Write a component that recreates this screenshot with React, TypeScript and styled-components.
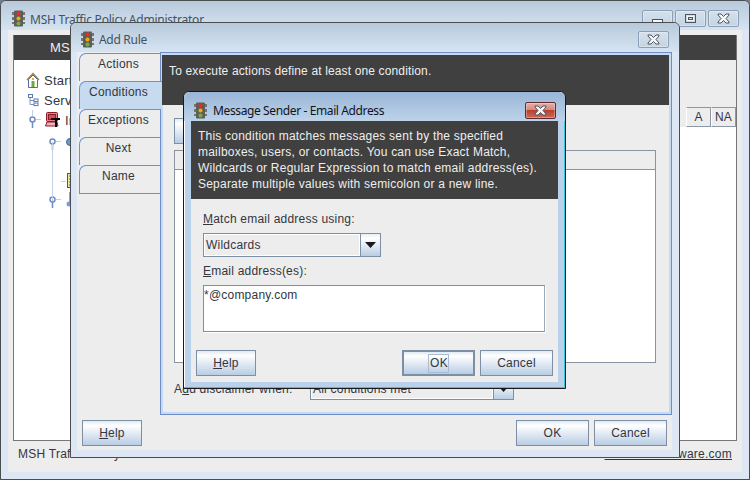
import React from "react";
import styled, { createGlobalStyle } from "styled-components";

const Global = createGlobalStyle`
  html, body { margin: 0; padding: 0; background: #6f7f8f; }
  #root { width: 750px; height: 480px; overflow: hidden; }
  * { box-sizing: border-box; }
`;

const Desktop = styled.div`
  position: relative;
  width: 750px;
  height: 480px;
  overflow: hidden;
  font-family: "Liberation Sans", Arial, sans-serif;
  font-size: 12px;
  letter-spacing: 0.22px;
  color: #33363f;
`;

const WindowShell = styled.div`
  display: flex;
  flex-direction: column;
  border: 1px solid #4a4d50;
  border-radius: 6px 6px 0 0;
  background: #dce7f3;
`;

const MainWindow = styled(WindowShell)`
  width: 750px;
  height: 480px;
`;

const RuleWindow = styled(WindowShell)`
  position: absolute;
  left: 70px;
  top: 22px;
  width: 610px;
  height: 436px;
`;

const SenderDialog = styled(WindowShell)`
  position: absolute;
  left: 183px;
  top: 91px;
  width: 383px;
  height: 298px;
  border-color: #1a1a1a;
  border-radius: 6px 6px 0 0;
  background: #b9d1ea;
  box-shadow: inset -1px -1px 0 #3ec6d8, inset 1px 1px 0 #fff;
`;

const TitleBar = styled.div<{ $h: number; $pad: number; $active?: boolean }>`
  flex: none;
  display: flex;
  align-items: center;
  height: ${(p) => p.$h}px;
  padding-top: ${(p) => p.$pad}px;
  background: ${(p) =>
    p.$active
      ? "linear-gradient(#99b5d6, #bdd3ea)"
      : "linear-gradient(#b8c9da, #d6e4f2)"};
  border-radius: 6px 6px 0 0;
`;

const TitleIcon = styled.svg<{ $left: number }>`
  flex: none;
  margin-left: ${(p) => p.$left}px;
  width: 13px;
  height: 17px;
`;

const TitleText = styled.div<{ $active?: boolean; $spacing: number }>`
  flex: 1;
  margin-left: ${(p) => (p.$active ? 6 : 5)}px;
  padding-top: 1px;
  font-family: "Noto Sans", "Liberation Sans", sans-serif;
  font-size: 12px;
  letter-spacing: ${(p) => p.$spacing}px;
  color: ${(p) => (p.$active ? "#10141c" : "#44525f")};
`;

const CaptionButtons = styled.div<{ $right: number }>`
  display: flex;
  gap: 2px;
  margin-right: ${(p) => p.$right}px;
`;

const CaptionButton = styled.div<{ $danger?: boolean }>`
  width: 31px;
  height: 17px;
  display: flex;
  align-items: center;
  justify-content: center;
  border: 1px solid ${(p) => (p.$danger ? "#5e2b33" : "#8ba0b6")};
  border-radius: 2px;
  background: ${(p) =>
    p.$danger
      ? "linear-gradient(#e5b0a6 0%, #d68a7c 45%, #b9402e 50%, #cf6a58 100%)"
      : "linear-gradient(#d5e0ec, #c4d4e4)"};
  box-shadow: inset 0 0 0 1px rgba(255, 255, 255, 0.3);
`;

const GlyphSvg = styled.svg`
  display: block;
`;

const Frame = styled.div<{ $left: number; $side: number }>`
  flex: 1;
  min-height: 0;
  display: flex;
  flex-direction: column;
  padding: 0 ${(p) => p.$side}px ${(p) => p.$side}px ${(p) => p.$left}px;
`;

const Surface = styled.div`
  flex: 1;
  min-height: 0;
  display: flex;
  flex-direction: column;
  background: #ededed;
`;

const MainSurface = styled(Surface)`
  padding: 5px 5px 0;
`;

const MainPanel = styled.div`
  flex: none;
  height: 406px;
  display: flex;
  flex-direction: column;
  border: 1px solid #777;
  border-top: 0;
`;

const Banner = styled.div`
  flex: none;
  background: #404040;
  color: #eee;
`;

const MainBanner = styled(Banner)`
  height: 25px;
  line-height: 25px;
  padding-left: 36px;
  font-size: 13px;
`;

const MainSplit = styled.div`
  flex: 1;
  min-height: 0;
  display: grid;
  grid-template-columns: 300px 1fr;
`;

const Tree = styled.div`
  background: #fff;
  padding-top: 10px;
  display: flex;
  flex-direction: column;
`;

const TreeRow = styled.div<{ $indent: number; $h?: number; $gap?: number; $end?: boolean }>`
  display: flex;
  align-items: ${(p) => (p.$end ? "flex-end" : "center")};
  gap: ${(p) => p.$gap ?? 4}px;
  height: ${(p) => p.$h ?? 20}px;
  padding-left: ${(p) => p.$indent}px;
  white-space: nowrap;
  font-size: 13px;
`;

const TreeBranch = styled.div`
  position: relative;
  margin-top: 2px;
  &::before {
    content: "";
    position: absolute;
    left: 38px;
    top: 10px;
    height: 59px;
    width: 1px;
    background: #c3d1e4;
  }
`;

const MainRight = styled.div`
  display: flex;
  flex-direction: column;
`;

const MainSpacer = styled.div`
  height: 47px;
  background: #ededed;
`;

const ColumnHead = styled.div`
  height: 20px;
  display: flex;
  justify-content: flex-end;
  background: #ededed;
`;

const HeadCell = styled.div<{ $w: number }>`
  width: ${(p) => p.$w}px;
  display: flex;
  align-items: center;
  justify-content: center;
  border-right: 1px solid #8a98a8;
  border-bottom: 1px solid #8a98a8;
  border-top: 1px solid #8a98a8;
  border-left: 1px solid #fff;
`;

const WhiteFill = styled.div`
  flex: 1;
  background: #fff;
`;

const StatusBar = styled.div`
  flex: 1;
  display: flex;
  justify-content: space-between;
  align-items: center;
  padding: 0 5px 5px;
  letter-spacing: 0.25px;
`;

const StatusLink = styled.span`
  text-decoration: underline;
`;

const RuleBody = styled(Surface)`
  display: grid;
  grid-template-columns: minmax(0, 1fr);
  grid-template-rows: 363px 1fr;
`;

const RuleTop = styled.div`
  display: flex;
  padding-left: 2px;
  min-height: 0;
  min-width: 0;
`;

const TabColumn = styled.div`
  flex: none;
  width: 81px;
  padding-top: 1px;
  display: flex;
  flex-direction: column;
`;

const Tab = styled.div<{ $selected?: boolean }>`
  position: relative;
  z-index: ${(p) => (p.$selected ? 2 : 0)};
  height: 28px;
  margin-right: ${(p) => (p.$selected ? "-2px" : "0")};
  padding-top: 3px;
  padding-right: ${(p) => (p.$selected ? "5px" : "3px")};
  line-height: 15px;
  text-align: center;
  border-top: 1px solid #7190c8;
  border-left: 1px solid #7190c8;
  border-top-left-radius: 7px;
  background: ${(p) => (p.$selected ? "#c6daf0" : "#ededed")};
`;

const TabEnd = styled.div`
  height: 1px;
  background: #7190c8;
`;

const TabPanel = styled.div`
  flex: 1;
  min-width: 0;
  display: flex;
  flex-direction: column;
  border: 1px solid #6d8cc8;
  background: #ededed;
  box-shadow: inset 0 0 0 2px #c6daf0;
  padding: 2px 2px 3px 1px;
`;

const RuleBanner = styled(Banner)`
  height: 50px;
  padding: 9px 7px;
  line-height: 15px;
  letter-spacing: 0.14px;
`;

const PanelContent = styled.div`
  flex: 1;
  padding: 13px 13px 0 12px;
  display: flex;
  flex-direction: column;
`;

const Table = styled.div`
  height: 213px;
  margin-top: 6px;
  width: 482px;
  border: 1px solid #8a94a0;
  display: flex;
  flex-direction: column;
`;

const TableHead = styled.div`
  height: 19px;
  border-bottom: 1px solid #8a94a0;
  background: #ededed;
`;

const TableFill = styled.div`
  flex: 1;
  background: #fff;
`;

const ConditionRow = styled.div`
  display: flex;
  align-items: center;
  margin-top: 15px;
  white-space: nowrap;
`;

const ConditionLabel = styled.div`
  width: 136px;
`;

const Combo = styled.div<{ $w: number; $h: number }>`
  flex: none;
  display: flex;
  width: ${(p) => p.$w}px;
  height: ${(p) => p.$h}px;
  border: 1px solid #7d8fa3;
  background: #ededed;
`;

const ComboValue = styled.div`
  flex: 1;
  display: flex;
  align-items: center;
  padding-left: 2px;
  box-shadow: inset 0 0 0 1px #fff;
`;

const ComboArrow = styled.div`
  flex: none;
  width: 20px;
  display: flex;
  align-items: center;
  justify-content: center;
  border-left: 1px solid #7d8fa3;
  background: linear-gradient(#e9eff6, #fff 20%, #b9cde3);
`;

const Button = styled.div<{ $w: number; $default?: boolean }>`
  flex: none;
  width: ${(p) => p.$w}px;
  height: 26px;
  display: flex;
  align-items: center;
  justify-content: center;
  border: ${(p) => (p.$default ? 2 : 1)}px solid #7d8fa3;
  background: linear-gradient(#dfe8f2 0%, #fff 18%, #b8cde3 100%);
`;

const FocusLabel = styled.span`
  padding: 1px 0 1px 1px;
  outline: 1px solid #a9bcd6;
  line-height: 15px;
`;

const ButtonBar = styled.div<{ $pad: string }>`
  display: flex;
  justify-content: space-between;
  padding: ${(p) => p.$pad};
`;

const ButtonGroup = styled.div`
  display: flex;
  gap: 5px;
`;

const Mnemonic = styled.span`
  text-decoration: underline;
`;

const DialogBanner = styled(Banner)`
  height: 78px;
  padding: 7px 7px;
  line-height: 16px;
`;

const DialogBody = styled(Surface)`
  flex: none;
  height: 183px;
`;

const DialogForm = styled.div`
  flex: 1;
  padding: 12px 12px 0;
  display: flex;
  flex-direction: column;
`;

const FieldLabel = styled.div<{ $top?: number }>`
  line-height: 16px;
  height: 16px;
  margin-top: ${(p) => p.$top ?? 0}px;
  margin-bottom: 6px;
`;

const AddressBox = styled.div`
  width: 342px;
  height: 47px;
  background: #fff;
  border: 1px solid #7d8fa3;
  border-right-color: #9aa8b8;
  box-shadow: 1px 1px 0 #fff;
  padding: 2px 0 0 0;
  line-height: 15px;
`;

const Traffic = ({ left }: { left: number }) => (
  <TitleIcon $left={left} viewBox="0 0 13 17">
    <path d="M0 2h2v3H0zM11 2h2v3h-2zM0 7h2v3H0zM11 7h2v3h-2zM0 12h2v2H0zM11 12h2v2h-2z" fill="#77756f" />
    <rect x="2" y="0.5" width="9" height="16" rx="1" fill="#5e5e58" />
    <circle cx="6.5" cy="3.5" r="2" fill="#ee2a22" />
    <circle cx="6.5" cy="8.5" r="2" fill="#f2a81e" />
    <circle cx="6.5" cy="13.5" r="2" fill="#6fb13a" />
  </TitleIcon>
);

const CloseGlyph = () => (
  <GlyphSvg width="13" height="11" viewBox="0 0 13 11">
    <path
      d="M1 1h3l2.5 2.5L9 1h3v1L9 5.5 12 9v1H9L6.5 7.5 4 10H1V9l3-3.5L1 2z"
      fill="#f4f6f8"
      stroke="#4e5560"
      strokeWidth="1"
    />
  </GlyphSvg>
);

const MinGlyph = () => (
  <GlyphSvg width="11" height="9" viewBox="0 0 11 9">
    <rect x="0.5" y="5.5" width="10" height="3" fill="#f4f6f8" stroke="#4e5560" />
  </GlyphSvg>
);

const MaxGlyph = () => (
  <GlyphSvg width="11" height="9" viewBox="0 0 11 9">
    <rect x="0.5" y="0.5" width="10" height="8" fill="none" stroke="#4e5560" />
    <rect x="2.5" y="2.5" width="6" height="4" fill="none" stroke="#f4f6f8" />
    <rect x="3.5" y="3.5" width="4" height="2" fill="none" stroke="#4e5560" />
  </GlyphSvg>
);

const ArrowGlyph = () => (
  <GlyphSvg width="11" height="6" viewBox="0 0 11 6">
    <path d="M0 0h11L5.5 6z" fill="#1a1a1a" />
  </GlyphSvg>
);

const Handle = ({ up }: { up?: boolean }) => (
  <GlyphSvg width="14" height="20" viewBox="0 0 14 20">
    {up && <path d="M5.5 0v6" stroke="#c3d1e4" />}
    <path d="M9 9.5h5" stroke="#c3d1e4" />
    <circle cx="5.5" cy="9.5" r="2.5" fill="#fff" stroke="#6e8cc4" strokeWidth="1.5" />
    <path d="M5.5 12v6" stroke="#6e8cc4" strokeWidth="1.5" />
  </GlyphSvg>
);

const HouseIcon = () => (
  <GlyphSvg width="14" height="16" viewBox="0 0 14 16">
    <path d="M1 8l6-6.5L13 8" fill="none" stroke="#a07c4a" strokeWidth="1.3" />
    <path d="M2.5 7.5L7 3l4.5 4.5v8h-9z" fill="#fff" stroke="#4a6fa0" />
    <rect x="5.5" y="9" width="3" height="6" fill="#6fa83e" />
    <rect x="6" y="6" width="2" height="2" fill="#e0b040" />
  </GlyphSvg>
);

const ServicesIcon = () => (
  <GlyphSvg width="14" height="14" viewBox="0 0 14 14">
    <path d="M4 4v7.5h4M4 7.5h4" fill="none" stroke="#7f97c0" />
    <rect x="2.5" y="1.5" width="4" height="3" fill="#fff" stroke="#5a7ab0" />
    <rect x="8" y="6" width="4" height="2.6" fill="#fff" stroke="#5a7ab0" />
    <rect x="8" y="10" width="4" height="2.6" fill="#fff" stroke="#5a7ab0" />
  </GlyphSvg>
);

const ServerIcon = () => (
  <GlyphSvg width="16" height="16" viewBox="0 0 16 16">
    <rect x="1.5" y="0.5" width="11" height="9" rx="1" fill="#e8808a" stroke="#8a1a28" />
    <rect x="3.5" y="2.5" width="7" height="5" fill="#d0505c" stroke="#8a1a28" />
    <path d="M0.5 14l1.5-4h10l1 4z" fill="#f0b0b8" stroke="#8a1a28" />
    <path d="M6 6h9v2h-3v7h-2V8H6z" fill="#000" />
  </GlyphSvg>
);

const BallIcon = () => (
  <GlyphSvg width="8" height="8" viewBox="0 0 8 8">
    <circle cx="4" cy="4" r="3.5" fill="#6a9ac8" stroke="#3d6a98" />
  </GlyphSvg>
);

const DocIcon = () => (
  <GlyphSvg width="20" height="16" viewBox="0 0 20 16">
    <path d="M0 8.5h5" stroke="#c3d1e4" />
    <rect x="6.5" y="0.5" width="6" height="14" fill="#f4e8a0" stroke="#555" />
    <path d="M8 3h4M8 6h4M8 9h4M8 12h4" stroke="#2a8a70" />
  </GlyphSvg>
);

const PenIcon = () => (
  <GlyphSvg width="10" height="16" viewBox="0 0 10 16">
    <rect x="3.5" y="0.5" width="4" height="9" fill="#dfe3e8" stroke="#9aa4ae" />
    <circle cx="3" cy="12" r="2.5" fill="#7a9ad8" />
  </GlyphSvg>
);

export default function App() {
  return (
    <Desktop>
      <Global />
      <MainWindow>
        <TitleBar $h={29} $pad={6}>
          <Traffic left={11} />
          <TitleText $spacing={-0.22}>MSH Traffic Policy Administrator</TitleText>
          <CaptionButtons $right={10}>
            <CaptionButton><MinGlyph /></CaptionButton>
            <CaptionButton><MaxGlyph /></CaptionButton>
            <CaptionButton><CloseGlyph /></CaptionButton>
          </CaptionButtons>
        </TitleBar>
        <Frame $left={7} $side={7}>
          <MainSurface>
            <MainPanel>
              <MainBanner>MSH Traffic Policy Administrator</MainBanner>
              <MainSplit>
                <Tree>
                  <TreeRow $indent={12}><HouseIcon />Start Page</TreeRow>
                  <TreeRow $indent={12}><ServicesIcon />Services</TreeRow>
                  <TreeRow $indent={13}><Handle up /><ServerIcon />Incoming</TreeRow>
                  <TreeBranch>
                    <TreeRow $indent={33} $gap={5}><Handle /><BallIcon />Rules</TreeRow>
                    <TreeRow $indent={47} $h={37} $gap={0} $end><DocIcon /></TreeRow>
                    <TreeRow $indent={33} $gap={5} $h={22}><Handle /><PenIcon /></TreeRow>
                  </TreeBranch>
                </Tree>
                <MainRight>
                  <MainSpacer />
                  <ColumnHead>
                    <HeadCell $w={25}>A</HeadCell>
                    <HeadCell $w={25}>NA</HeadCell>
                  </ColumnHead>
                  <WhiteFill />
                </MainRight>
              </MainSplit>
            </MainPanel>
            <StatusBar>
              <span>MSH Traffic Policy Administrator</span>
              <StatusLink>www.mshsoftware.com</StatusLink>
            </StatusBar>
          </MainSurface>
        </Frame>
      </MainWindow>

      <RuleWindow>
        <TitleBar $h={29} $pad={3}>
          <Traffic left={10} />
          <TitleText $spacing={-0.3}>Add Rule</TitleText>
          <CaptionButtons $right={10}>
            <CaptionButton><CloseGlyph /></CaptionButton>
          </CaptionButtons>
        </TitleBar>
        <Frame $left={6} $side={7}>
          <RuleBody>
            <RuleTop>
              <TabColumn>
                <Tab>Actions</Tab>
                <Tab $selected>Conditions</Tab>
                <Tab>Exceptions</Tab>
                <Tab>Next</Tab>
                <Tab>Name</Tab>
                <TabEnd />
              </TabColumn>
              <TabPanel>
                <RuleBanner>To execute actions define at least one condition.</RuleBanner>
                <PanelContent>
                  <Button $w={70}>Add</Button>
                  <Table>
                    <TableHead />
                    <TableFill />
                  </Table>
                  <ConditionRow>
                    <ConditionLabel>A<Mnemonic>d</Mnemonic>d disclaimer when:</ConditionLabel>
                    <Combo $w={204} $h={22}>
                      <ComboValue>All conditions met</ComboValue>
                      <ComboArrow><ArrowGlyph /></ComboArrow>
                    </Combo>
                  </ConditionRow>
                </PanelContent>
              </TabPanel>
            </RuleTop>
            <ButtonBar $pad="5px 5px 0">
              <Button $w={60}><span><Mnemonic>H</Mnemonic>elp</span></Button>
              <ButtonGroup>
                <Button $w={73}>OK</Button>
                <Button $w={73}>Cancel</Button>
              </ButtonGroup>
            </ButtonBar>
          </RuleBody>
        </Frame>
      </RuleWindow>

      <SenderDialog>
        <TitleBar $h={29} $pad={7} $active>
          <Traffic left={10} />
          <TitleText $active $spacing={-0.38}>Message Sender - Email Address</TitleText>
          <CaptionButtons $right={9}>
            <CaptionButton $danger><CloseGlyph /></CaptionButton>
          </CaptionButtons>
        </TitleBar>
        <Frame $left={7} $side={7}>
          <DialogBanner>
            This condition matches messages sent by the specified<br />
            mailboxes, users, or contacts. You can use Exact Match,<br />
            Wildcards or Regular Expression to match email address(es).<br />
            Separate multiple values with semicolon or a new line.
          </DialogBanner>
          <DialogBody>
            <DialogForm>
              <FieldLabel><Mnemonic>M</Mnemonic>atch email address using:</FieldLabel>
              <Combo $w={178} $h={24}>
                <ComboValue>Wildcards</ComboValue>
                <ComboArrow><ArrowGlyph /></ComboArrow>
              </Combo>
              <FieldLabel $top={6}><Mnemonic>E</Mnemonic>mail address(es):</FieldLabel>
              <AddressBox>*@company.com</AddressBox>
            </DialogForm>
            <ButtonBar $pad="0 5px 6px">
              <Button $w={60}><span><Mnemonic>H</Mnemonic>elp</span></Button>
              <ButtonGroup>
                <Button $w={73} $default><FocusLabel>OK</FocusLabel></Button>
                <Button $w={73}>Cancel</Button>
              </ButtonGroup>
            </ButtonBar>
          </DialogBody>
        </Frame>
      </SenderDialog>
    </Desktop>
  );
}
